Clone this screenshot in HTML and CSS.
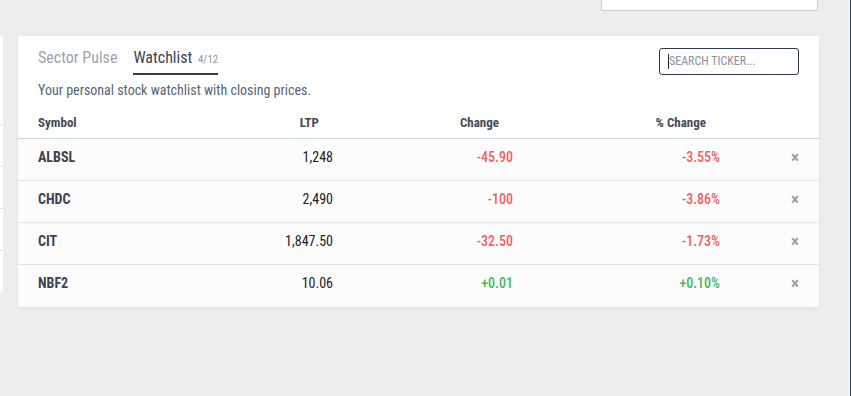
FILE: index.html
```html
<!DOCTYPE html>
<html lang="en">
<head>
<meta charset="utf-8">
<title>Watchlist</title>
<link rel="stylesheet" href="styles.css">
</head>
<body>
<div class="frame">
  <div class="side-strip">
    <div class="strip-panel">
      <div class="strip-cell"></div>
      <div class="strip-cell"></div>
      <div class="strip-cell"></div>
      <div class="strip-cell"></div>
      <div class="strip-cell"></div>
    </div>
  </div>
  <main class="main">
    <div class="topbar">
      <div class="top-input"></div>
    </div>
    <section class="card">
      <div class="card-head">
        <nav class="tabs">
          <span class="tab">Sector Pulse</span>
          <span class="tab tab-active">Watchlist <small class="count">4/12</small></span>
        </nav>
        <div class="search"><span class="caret"></span>SEARCH TICKER...</div>
      </div>
      <p class="desc">Your personal stock watchlist with closing prices.</p>
      <div class="table">
        <div class="row head">
          <div class="c-sym">Symbol</div>
          <div class="c-num">LTP</div>
          <div class="c-num">Change</div>
          <div class="c-num">% Change</div>
          <div class="c-x"></div>
        </div>
        <div class="row">
          <div class="c-sym">ALBSL</div>
          <div class="c-num">1,248</div>
          <div class="c-num neg">-45.90</div>
          <div class="c-num neg">-3.55%</div>
          <div class="c-x">×</div>
        </div>
        <div class="row">
          <div class="c-sym">CHDC</div>
          <div class="c-num">2,490</div>
          <div class="c-num neg">-100</div>
          <div class="c-num neg">-3.86%</div>
          <div class="c-x">×</div>
        </div>
        <div class="row">
          <div class="c-sym">CIT</div>
          <div class="c-num">1,847.50</div>
          <div class="c-num neg">-32.50</div>
          <div class="c-num neg">-1.73%</div>
          <div class="c-x">×</div>
        </div>
        <div class="row">
          <div class="c-sym">NBF2</div>
          <div class="c-num">10.06</div>
          <div class="c-num pos">+0.01</div>
          <div class="c-num pos">+0.10%</div>
          <div class="c-x">×</div>
        </div>
      </div>
    </section>
  </main>
  <div class="edge-light"></div>
  <div class="edge-line"></div>
  <div class="edge-dark"></div>
</div>
</body>
</html>
```

FILE: styles.css
```css
* { box-sizing: border-box; }
html, body { margin: 0; padding: 0; }
body {
  background: #ededed;
  font-family: "Roboto Condensed", "Liberation Sans Narrow", "Roboto", sans-serif;
  color: #3a4350;
  width: 851px;
  height: 396px;
  overflow: hidden;
}
.frame {
  display: flex;
  width: 851px;
  height: 396px;
}
.side-strip {
  width: 3px;
  flex: none;
  padding-top: 36px;
}
.strip-panel {
  background: #fff;
  height: 258px;
  display: flex;
  flex-direction: column;
  padding-top: 88px;
}
.strip-cell {
  height: 42px;
  flex: none;
  border-top: 1px solid #dfe3e6;
}
.main {
  width: 816px;
  flex: none;
  padding-left: 15px;
}
.topbar {
  display: flex;
  justify-content: flex-end;
  height: 36px;
}
.top-input {
  width: 217px;
  height: 11px;
  margin-right: 1px;
  background: #fff;
  border: 1px solid #c2ced8;
  border-top: none;
}
.card {
  width: 801px;
  background: #fff;
  box-shadow: 0 1px 4px rgba(0, 0, 0, 0.06);
  padding-top: 12px;
}
.card-head {
  display: flex;
  justify-content: space-between;
  align-items: flex-start;
  padding: 0 20px;
  height: 27px;
}
.tabs {
  display: flex;
  gap: 16px;
}
.tab {
  font-size: 16px;
  line-height: 20px;
  color: #9ba3ad;
  padding-bottom: 3px;
  border-bottom: 2px solid transparent;
}
.tab-active {
  color: #3c4451;
  border-bottom-color: #323c50;
}
.count {
  font-size: 11px;
  color: #8e96a0;
  margin-left: 2px;
}
.search {
  width: 140px;
  height: 27px;
  border: 1px solid #2f3a4f;
  border-radius: 3px;
  padding-left: 8px;
  font-size: 12px;
  line-height: 25px;
  color: #8b929b;
  display: flex;
  align-items: center;
}
.caret {
  display: inline-block;
  width: 1px;
  height: 15px;
  background: #222;
}
.desc {
  margin: 5px 0 0;
  padding: 0 20px;
  font-size: 14px;
  line-height: 20px;
  color: #566574;
}
.row {
  display: grid;
  grid-template-columns: 175px 120px 180px 207px 79px;
  padding: 9px 20px 0;
  height: 42px;
  align-items: start;
  background: #fcfcfc;
  border-bottom: 1px solid #e2e5e8;
  font-size: 14px;
  line-height: 18px;
}
.row:last-child { border-bottom: none; }
.row.head {
  background: #fff;
  height: 39px;
  padding-top: 14px;
  border-bottom: 1px solid #c9d5de;
  font-size: 13px;
  font-weight: 700;
  color: #434b57;
}
.c-sym {
  font-weight: 700;
  color: #3a4350;
}
.head .c-sym { color: #434b57; }
.c-num {
  text-align: right;
  color: #222;
}
.head .c-num {
  padding-right: 14px;
  color: #434b57;
}
.neg { color: #f0605f; font-weight: 500; }
.pos { color: #3cb862; font-weight: 500; }
.c-x {
  text-align: right;
  font-weight: 700;
  color: #959da8;
  font-size: 17px;
  line-height: 18px;
}
.edge-light {
  width: 29px;
  flex: none;
}
.edge-line {
  width: 2px;
  flex: none;
  background: #f2f2f2;
}
.edge-dark {
  width: 3px;
  flex: none;
  background: #2c3a46;
}
```
